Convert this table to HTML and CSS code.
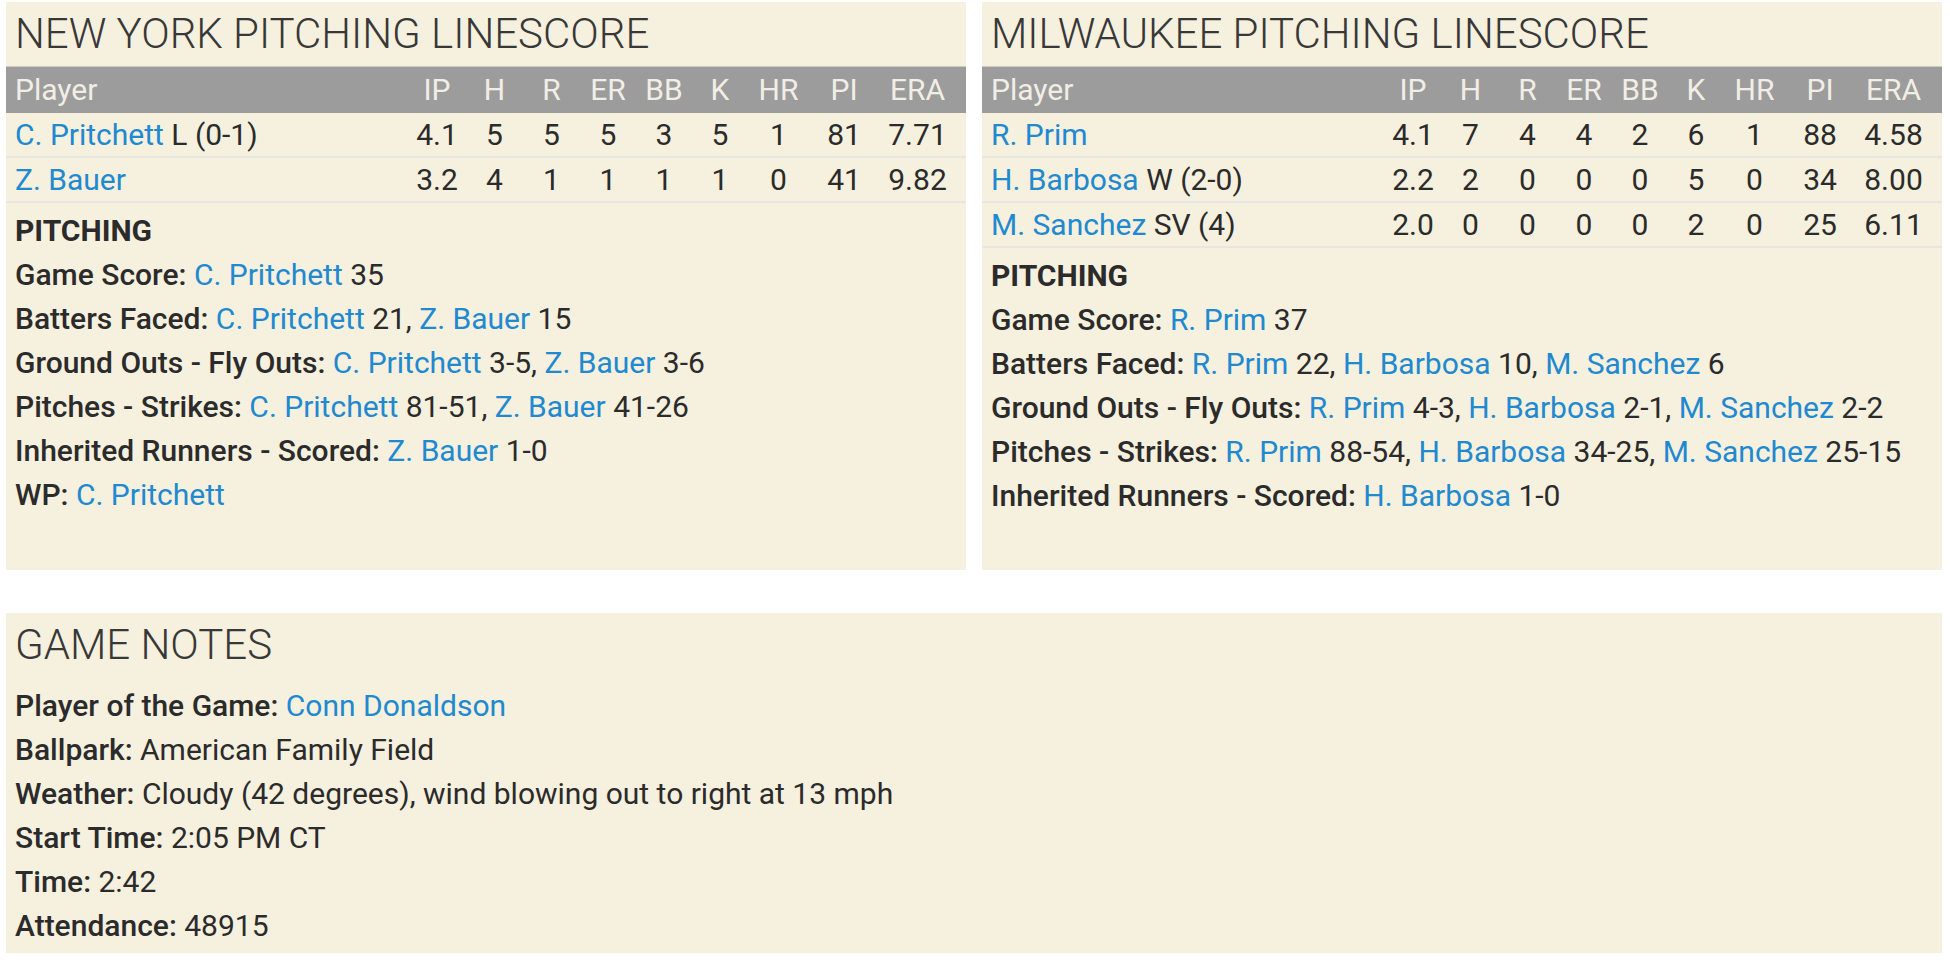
FILE: index.html
```html
<!DOCTYPE html>
<html lang="en">
<head>
<meta charset="utf-8">
<title>Pitching Linescore</title>
<link rel="stylesheet" href="styles.css">
</head>
<body>
<div class="page">
  <div class="top">
    <section class="panel">
      <h2 class="title">NEW YORK PITCHING LINESCORE</h2>
      <div class="linescore">
        <div class="row head"><span class="player">Player</span><span>IP</span><span>H</span><span>R</span><span>ER</span><span>BB</span><span>K</span><span>HR</span><span>PI</span><span>ERA</span></div>
        <div class="row"><span class="player"><a href="#">C. Pritchett</a> L (0-1)</span><span>4.1</span><span>5</span><span>5</span><span>5</span><span>3</span><span>5</span><span>1</span><span>81</span><span>7.71</span></div>
        <div class="row"><span class="player"><a href="#">Z. Bauer</a></span><span>3.2</span><span>4</span><span>1</span><span>1</span><span>1</span><span>1</span><span>0</span><span>41</span><span>9.82</span></div>
      </div>
      <div class="info info-pitch">
        <div class="info-head">PITCHING</div>
        <p><b>Game Score:</b> <a href="#">C. Pritchett</a> 35</p>
        <p><b>Batters Faced:</b> <a href="#">C. Pritchett</a> 21, <a href="#">Z. Bauer</a> 15</p>
        <p><b>Ground Outs - Fly Outs:</b> <a href="#">C. Pritchett</a> 3-5, <a href="#">Z. Bauer</a> 3-6</p>
        <p><b>Pitches - Strikes:</b> <a href="#">C. Pritchett</a> 81-51, <a href="#">Z. Bauer</a> 41-26</p>
        <p><b>Inherited Runners - Scored:</b> <a href="#">Z. Bauer</a> 1-0</p>
        <p><b>WP:</b> <a href="#">C. Pritchett</a></p>
      </div>
    </section>
    <section class="panel">
      <h2 class="title">MILWAUKEE PITCHING LINESCORE</h2>
      <div class="linescore">
        <div class="row head"><span class="player">Player</span><span>IP</span><span>H</span><span>R</span><span>ER</span><span>BB</span><span>K</span><span>HR</span><span>PI</span><span>ERA</span></div>
        <div class="row"><span class="player"><a href="#">R. Prim</a></span><span>4.1</span><span>7</span><span>4</span><span>4</span><span>2</span><span>6</span><span>1</span><span>88</span><span>4.58</span></div>
        <div class="row"><span class="player"><a href="#">H. Barbosa</a> W (2-0)</span><span>2.2</span><span>2</span><span>0</span><span>0</span><span>0</span><span>5</span><span>0</span><span>34</span><span>8.00</span></div>
        <div class="row"><span class="player"><a href="#">M. Sanchez</a> SV (4)</span><span>2.0</span><span>0</span><span>0</span><span>0</span><span>0</span><span>2</span><span>0</span><span>25</span><span>6.11</span></div>
      </div>
      <div class="info info-pitch">
        <div class="info-head">PITCHING</div>
        <p><b>Game Score:</b> <a href="#">R. Prim</a> 37</p>
        <p><b>Batters Faced:</b> <a href="#">R. Prim</a> 22, <a href="#">H. Barbosa</a> 10, <a href="#">M. Sanchez</a> 6</p>
        <p><b>Ground Outs - Fly Outs:</b> <a href="#">R. Prim</a> 4-3, <a href="#">H. Barbosa</a> 2-1, <a href="#">M. Sanchez</a> 2-2</p>
        <p><b>Pitches - Strikes:</b> <a href="#">R. Prim</a> 88-54, <a href="#">H. Barbosa</a> 34-25, <a href="#">M. Sanchez</a> 25-15</p>
        <p><b>Inherited Runners - Scored:</b> <a href="#">H. Barbosa</a> 1-0</p>
      </div>
    </section>
  </div>
  <section class="panel notes-panel">
    <h2 class="title">GAME NOTES</h2>
    <div class="info info-notes">
      <p><b>Player of the Game:</b> <a href="#">Conn Donaldson</a></p>
      <p><b>Ballpark:</b> American Family Field</p>
      <p><b>Weather:</b> Cloudy (42 degrees), wind blowing out to right at 13 mph</p>
      <p><b>Start Time:</b> 2:05 PM CT</p>
      <p><b>Time:</b> 2:42</p>
      <p><b>Attendance:</b> 48915</p>
    </div>
  </section>
</div>
</body>
</html>
```

FILE: styles.css
```css
html, body {
  margin: 0;
  padding: 0;
  background: #ffffff;
}

body {
  font-family: Roboto, "Liberation Sans", Arial, sans-serif;
  font-size: 30px;
  color: #2b2b2b;
}

.page {
  padding: 2px 8px 0 6px;
  display: flex;
  flex-direction: column;
  gap: 43px;
}

.top {
  display: flex;
  gap: 16px;
  align-items: stretch;
}

.top .panel {
  flex: 0 0 960px;
}

.panel {
  background: #f6f0de;
  display: flex;
  flex-direction: column;
}

.title {
  margin: 0;
  height: 64px;
  line-height: 64px;
  padding: 0 9px;
  font-size: 42px;
  font-weight: 300;
  color: #383838;
  white-space: nowrap;
}

.linescore {
  display: flex;
  flex-direction: column;
}

.row {
  display: grid;
  grid-template-columns: 1fr 58px 57px 57px 56px 56px 56px 61px 70px 77px;
  padding: 0 10px 0 9px;
  height: 43px;
  line-height: 43px;
  border-bottom: 2px solid #e8e6e2;
  white-space: nowrap;
}

.row span {
  text-align: center;
}

.row .player {
  text-align: left;
}

.row.head {
  background: #9c9c9c;
  color: #f1eee6;
  height: 46px;
  line-height: 46px;
  border-top: 1px solid #cfcac0;
  border-bottom: none;
}

a {
  color: #2189d0;
  text-decoration: none;
}

.info {
  padding: 6px 9px 0;
}

.info-pitch {
  padding-bottom: 52px;
}

.info-notes {
  padding-top: 7px;
  padding-bottom: 5px;
}

.info-head {
  font-weight: 700;
  line-height: 44px;
  height: 44px;
}

.info p {
  margin: 0;
  line-height: 44px;
  height: 44px;
  white-space: nowrap;
}

.info b {
  font-weight: 500;
}
```
